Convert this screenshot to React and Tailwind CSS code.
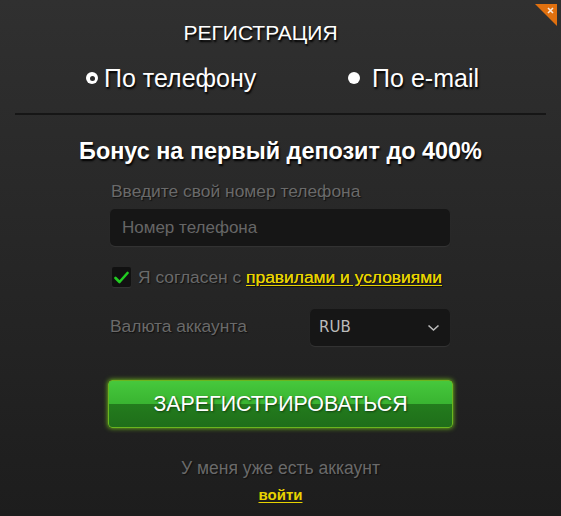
import React from "react";

export default function App() {
  return (
    <div className="relative w-[561px] h-[516px] bg-gradient-to-b from-[#303030] to-[#1d1d1d] font-['Liberation_Sans',Arial,sans-serif] overflow-hidden">
      {/* close corner */}
      <button className="absolute right-[4px] top-[4px] w-[22px] h-[22px]" type="button">
        <svg width="22" height="22" viewBox="0 0 22 22">
          <polygon points="0,0 22,0 22,22" fill="#e0700f" />
          <path d="M13 4 L18 9 M18 4 L13 9" stroke="#fff" strokeWidth="1.6" opacity="0.85" />
        </svg>
      </button>

      <div className="flex flex-col items-center pt-[18px]">
        <h2 className="mr-[40px] text-[21px] leading-[30px] text-white [text-shadow:1px_2px_2px_#000]">
          РЕГИСТРАЦИЯ
        </h2>

        <div className="flex w-full mt-[15px] pl-[86px] pr-[82px] justify-between">
          <label className="flex items-center gap-[6px] text-[25px] leading-[30px] text-white [text-shadow:1px_2px_2px_#000]">
            <span className="w-[12px] h-[12px] rounded-full bg-white flex items-center justify-center">
              <span className="w-[5px] h-[5px] rounded-full bg-[#2e2e2e]"></span>
            </span>
            По телефону
          </label>
          <label className="flex items-center gap-[12px] text-[25px] leading-[30px] text-white [text-shadow:1px_2px_2px_#000]">
            <span className="w-[12px] h-[12px] rounded-full bg-white"></span>
            По e-mail
          </label>
        </div>

        <hr className="w-[531px] mt-[20px] border-0 h-[2px] bg-[#161616]" />

        <h3 className="mt-[21px] text-[23.4px] leading-[30px] font-bold text-white [text-shadow:1px_2px_2px_#000]">
          Бонус на первый депозит до 400%
        </h3>

        <div className="w-[340px] mt-[14px] -ml-[1px]">
          <div className="text-[17.4px] leading-[22px] text-[#6a6a6a] pl-[1px] [text-shadow:1px_1px_1px_#111]">
            Введите свой номер телефона
          </div>
          <input
            className="mt-[7px] w-full h-[37px] rounded-[5px] bg-[#161616] px-[12px] text-[17px] text-[#ccc] placeholder-[#666] outline-none shadow-[0_1px_1px_#353535]"
            placeholder="Номер телефона"
          />

          <div className="flex items-center mt-[20px] ml-[2px] whitespace-nowrap">
            <span className="w-[19px] h-[20px] shrink-0 rounded-[2px] bg-[#111] flex items-center justify-center shadow-[0_1px_1px_#353535]">
              <svg width="15" height="13" viewBox="0 0 15 13">
                <path d="M1.5 7 L5.5 11 L13.5 2" stroke="#22cc22" strokeWidth="2.6" fill="none" strokeLinecap="round" strokeLinejoin="round" />
              </svg>
            </span>
            <span className="ml-[7px] text-[17.4px] leading-[22px] text-[#6a6a6a] [text-shadow:1px_1px_1px_#111]">
              Я согласен с{" "}
              <a href="#" className="text-[#e8d300] underline underline-offset-2 [text-shadow:0_0_0.6px_#e8d300,1px_1px_1px_#111]">
                правилами и условиями
              </a>
            </span>
          </div>

          <div className="flex items-center justify-between mt-[21px]">
            <span className="text-[17.4px] leading-[22px] text-[#6a6a6a] -mt-[3px] [text-shadow:1px_1px_1px_#111]">
              Валюта аккаунта
            </span>
            <div className="w-[140px] h-[37px] rounded-[5px] bg-[#161616] flex items-center justify-between pl-[9px] pr-[10px] shadow-[0_1px_1px_#353535]">
              <span className="text-[15px] text-[#bbbbbb] font-['DejaVu_Sans',sans-serif]">RUB</span>
              <svg width="13" height="8" viewBox="0 0 13 8">
                <path d="M1.5 1.5 L6.5 6 L11.5 1.5" stroke="#bbb" strokeWidth="1.6" fill="none" />
              </svg>
            </div>
          </div>
        </div>

        <button
          type="button"
          className="mt-[34px] w-[345px] h-[48px] rounded-[4px] border border-[#6bb51f] bg-[linear-gradient(to_bottom,#46c83c_0%,#39b431_50%,#237c1d_50%,#1f6e1a_100%)] shadow-[0_0_5px_#7bd11c] text-[21.4px] text-white [text-shadow:1px_1px_2px_#114411]"
        >
          ЗАРЕГИСТРИРОВАТЬСЯ
        </button>

        <div className="mt-[29px] text-[17.5px] leading-[22px] text-[#6a6a6a] [text-shadow:1px_1px_1px_#111]">
          У меня уже есть аккаунт
        </div>
        <a href="#" className="mt-[6px] text-[15px] leading-[20px] font-bold text-[#e8d300] underline underline-offset-2">
          войти
        </a>
      </div>
    </div>
  );
}
